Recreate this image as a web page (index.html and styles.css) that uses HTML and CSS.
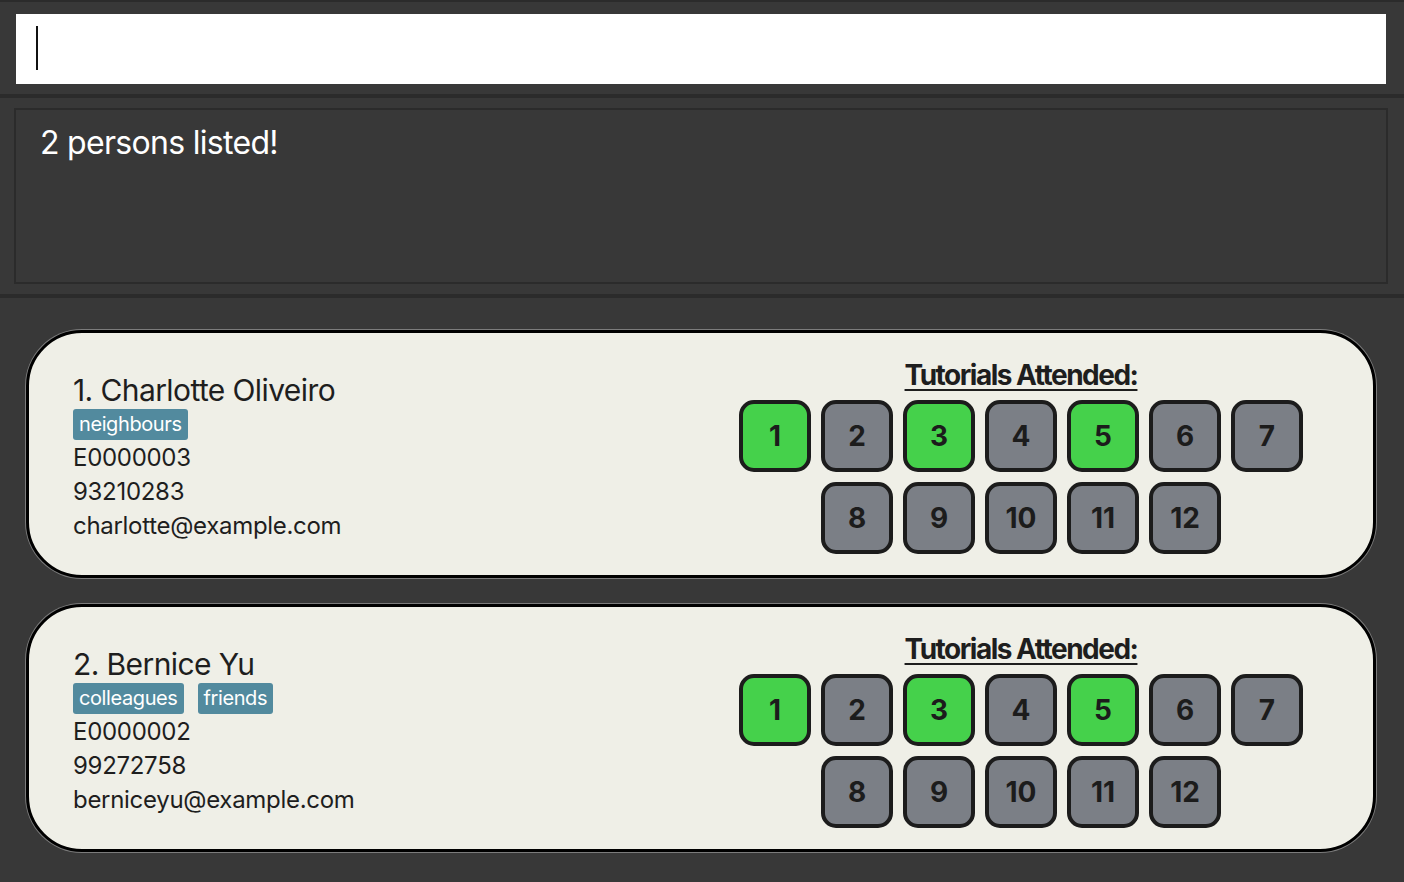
FILE: index.html
```html
<!DOCTYPE html>
<html>
<head>
<meta charset="utf-8">
<link rel="stylesheet" href="styles.css">
</head>
<body>
<div class="app">
  <div class="topstrip"></div>
  <div class="command-pane">
    <div class="command-box"><span class="caret"></span></div>
  </div>
  <div class="divider"></div>
  <div class="result-pane">
    <div class="result-box">2 persons listed!</div>
  </div>
  <div class="divider"></div>
  <div class="list">
    <div class="card">
      <div class="info">
        <div class="name">1. Charlotte Oliveiro</div>
        <div class="tags"><span class="tag">neighbours</span></div>
        <div class="field">E0000003</div>
        <div class="field">93210283</div>
        <div class="field">charlotte@example.com</div>
      </div>
      <div class="tutorials">
        <div class="tut-title">Tutorials Attended:</div>
        <div class="tut-grid">
          <div class="tut on">1</div><div class="tut">2</div><div class="tut on">3</div><div class="tut">4</div><div class="tut on">5</div><div class="tut">6</div><div class="tut">7</div>
          <div class="tut">8</div><div class="tut">9</div><div class="tut">10</div><div class="tut">11</div><div class="tut">12</div>
        </div>
      </div>
    </div>
    <div class="card">
      <div class="info">
        <div class="name">2. Bernice Yu</div>
        <div class="tags"><span class="tag">colleagues</span><span class="tag">friends</span></div>
        <div class="field">E0000002</div>
        <div class="field">99272758</div>
        <div class="field">berniceyu@example.com</div>
      </div>
      <div class="tutorials">
        <div class="tut-title">Tutorials Attended:</div>
        <div class="tut-grid">
          <div class="tut on">1</div><div class="tut">2</div><div class="tut on">3</div><div class="tut">4</div><div class="tut on">5</div><div class="tut">6</div><div class="tut">7</div>
          <div class="tut">8</div><div class="tut">9</div><div class="tut">10</div><div class="tut">11</div><div class="tut">12</div>
        </div>
      </div>
    </div>
  </div>
</div>
</body>
</html>
```

FILE: styles.css
```css
* { box-sizing: border-box; }
html, body {
  margin: 0;
  padding: 0;
  background: #383838;
  font-family: Inter, "Noto Sans", "Liberation Sans", sans-serif;
}
.app {
  width: 1404px;
  height: 882px;
  overflow: hidden;
}
.topstrip {
  height: 2px;
  background: #2b2b2b;
}
.command-pane {
  padding: 12px 18px 10px 16px;
  height: 92px;
}
.command-box {
  background: #ffffff;
  height: 70px;
  padding: 12px 20px;
}
.caret {
  display: block;
  width: 2px;
  height: 44px;
  background: #111;
}
.divider {
  height: 4px;
  background: #2b2b2b;
}
.result-pane {
  padding: 10px 16px 10px 14px;
  height: 196px;
}
.result-box {
  border: 2px solid #2b2b2b;
  height: 176px;
  color: #ffffff;
  font-size: 32px;
  letter-spacing: -0.7px;
  padding: 11px 24px;
  line-height: 44px;
}
.list {
  padding: 32px 28px 0 26px;
  display: flex;
  flex-direction: column;
  gap: 26px;
}
.card {
  height: 248px;
  background: #efefe7;
  border: 3px solid #000;
  border-radius: 56px;
  box-shadow: 0 0 0 1px rgba(170,170,170,0.6);
  display: flex;
  align-items: center;
  padding: 6px 62px 0 44px;
  color: #1e1e1e;
}
.info {
  flex: 1;
  display: flex;
  flex-direction: column;
}
.name {
  font-size: 30px;
  line-height: 36px;
  letter-spacing: -0.6px;
}
.tags {
  display: flex;
  gap: 14px;
  height: 33px;
  align-items: center;
}
.tag {
  background: #528a9e;
  color: #ffffff;
  font-size: 20px;
  line-height: 31px;
  height: 31px;
  padding: 0 6px;
  border-radius: 3px;
  letter-spacing: -0.4px;
}
.field {
  font-size: 24px;
  line-height: 34px;
  letter-spacing: -0.3px;
}
.tutorials {
  width: 580px;
  display: flex;
  flex-direction: column;
  align-items: center;
}
.tut-title {
  font-size: 28px;
  font-weight: 700;
  letter-spacing: -1.5px;
  line-height: 30px;
  text-decoration: underline;
  text-decoration-thickness: 2px;
  text-underline-offset: 4px;
  margin-bottom: 10px;
}
.tut-grid {
  display: flex;
  flex-wrap: wrap;
  justify-content: center;
  gap: 10px;
  width: 580px;
}
.tut {
  width: 72px;
  height: 72px;
  border: 4px solid #1c1c1c;
  border-radius: 15px;
  background: #7b7f86;
  display: flex;
  align-items: center;
  justify-content: center;
  font-size: 28px;
  font-weight: 700;
  color: #1c1c1c;
}
.tut.on {
  background: #45d14b;
}
```
